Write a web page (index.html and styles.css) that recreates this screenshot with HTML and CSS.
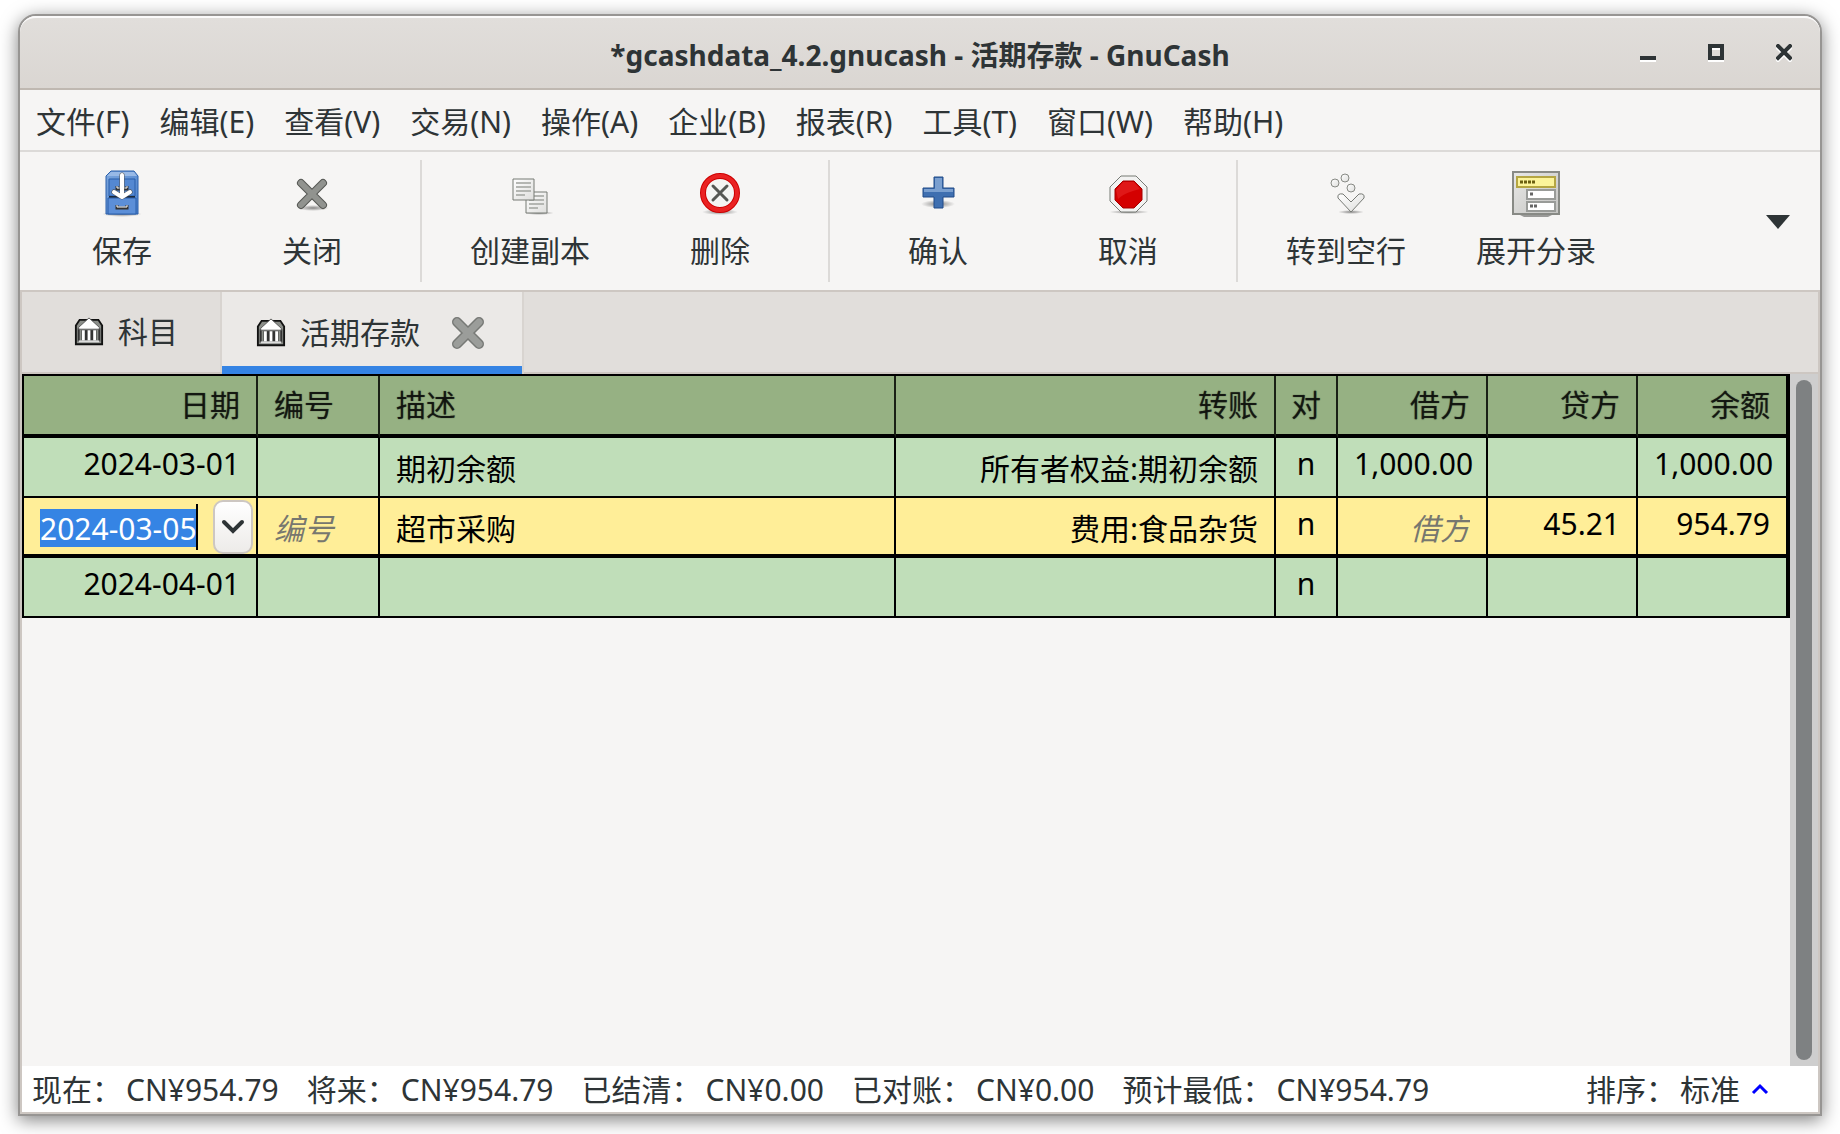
FILE: index.html
```html
<!DOCTYPE html>
<html lang="zh-CN">
<head>
<meta charset="utf-8">
<title>*gcashdata_4.2.gnucash - 活期存款 - GnuCash</title>
<link rel="stylesheet" href="styles.css">
</head>
<body>
<svg class="defs" aria-hidden="true">
  <defs>
    <linearGradient id="gray" x1="0" y1="0" x2="0" y2="1"><stop offset="0" stop-color="#a3a5a2"/><stop offset="1" stop-color="#8b8d8a"/></linearGradient>
    <linearGradient id="blue" x1="0" y1="0" x2="1" y2="1"><stop offset="0" stop-color="#7ba5dc"/><stop offset="1" stop-color="#4a80cc"/></linearGradient>
    <linearGradient id="paper" x1="0" y1="0" x2="1" y2="1"><stop offset="0" stop-color="#ffffff"/><stop offset="1" stop-color="#dededc"/></linearGradient>
    <linearGradient id="metal" x1="0" y1="0" x2="1" y2="1"><stop offset="0" stop-color="#e8e8e6"/><stop offset="1" stop-color="#c4c4c2"/></linearGradient>
    <radialGradient id="soft"><stop offset="0" stop-color="#000" stop-opacity=".45"/><stop offset="1" stop-color="#000" stop-opacity="0"/></radialGradient>
    <symbol id="bank" viewBox="0 0 32 32">
      <path d="M6 3h20l4 6v20H2V9z" fill="#8a8d88" stroke="#111" stroke-width="2"/>
      <path d="M5 12v14M27 12v14" stroke="#333" stroke-width="2"/>
      <path d="M16 1 5 11v2h22v-2z" fill="#fff" stroke="#555" stroke-width="1"/>
      <path d="M8 14h16v11H8z" fill="#333"/>
      <path d="M10 14v11M16 14v11M22 14v11" stroke="#fff" stroke-width="3"/>
      <path d="M5 26h22" stroke="#ddd" stroke-width="2"/>
    </symbol>
  </defs>
</svg>
<main class="window">
  <header class="titlebar">
    <h1>*gcashdata_4.2.gnucash - 活期存款 - GnuCash</h1>
    <div class="controls">
      <button type="button" aria-label="最小化"><svg viewBox="0 0 16 18"><path d="M0 14h16v4H0z" fill="#fff"/><path d="M0 12h16v4H0z"/></svg></button>
      <button type="button" aria-label="最大化"><svg viewBox="0 0 16 18"><path d="M2 4h12v12H2z" fill="none" stroke="#fff" stroke-width="4"/><path d="M2 2h12v12H2z" fill="none" stroke="#2e3436" stroke-width="4"/></svg></button>
      <button type="button" aria-label="关闭窗口"><svg viewBox="0 0 16 18"><path d="M2 4l12 12M14 4L2 16" stroke="#fff" stroke-width="4" stroke-linecap="square"/><path d="M2 2l12 12M14 2L2 14" stroke="#2e3436" stroke-width="4" stroke-linecap="square"/></svg></button>
    </div>
  </header>

  <nav class="menubar">
    <button type="button">文件(F)</button><button type="button">编辑(E)</button><button type="button">查看(V)</button><button type="button">交易(N)</button><button type="button">操作(A)</button><button type="button">企业(B)</button><button type="button">报表(R)</button><button type="button">工具(T)</button><button type="button">窗口(W)</button><button type="button">帮助(H)</button>
  </nav>

  <div class="toolbar">
    <button type="button">
      <svg viewBox="0 0 48 48"><ellipse cx="24" cy="45" rx="20" ry="3" fill="url(#soft)"/><path d="M13 2h23l4 5v38H8V7z" fill="url(#blue)" stroke="#2a5faa"/><path d="M9 7h30l-3-4H13z" fill="#98b9e6"/><path d="M11 10h26v17H11z" fill="#5488d2" stroke="#2a5faa"/><path d="M11 28h26" stroke="#1c2a3c" stroke-width="2"/><path d="M10 29h28v16H10z" fill="#5c8fd8" stroke="#2a5faa"/><path d="M19 17v3h10v-3M19 36v3h10v-3" fill="none" stroke="#333" stroke-width="3"/><path d="M19 17v2h10v-2M19 36v2h10v-2" fill="none" stroke="#fff"/><path d="M24 6v20M16 23l8 5 8-5" fill="none" stroke="#555" stroke-width="5" stroke-linecap="round" stroke-linejoin="round"/><path d="M24 6v20M16 23l8 5 8-5" fill="none" stroke="#fff" stroke-width="4" stroke-linecap="round" stroke-linejoin="round"/></svg>
      <span>保存</span>
    </button>
    <button type="button">
      <svg viewBox="0 0 48 48"><ellipse cx="25" cy="39" rx="16" ry="3" fill="url(#soft)"/><path d="M13 14l22 22M35 14L13 36" stroke="#555753" stroke-width="8" stroke-linecap="round"/><path d="M13 14l22 22M35 14L13 36" stroke="#91938f" stroke-width="6" stroke-linecap="round"/></svg>
      <span>关闭</span>
    </button>
    <hr>
    <button type="button">
      <svg viewBox="0 0 48 48"><ellipse cx="33" cy="44" rx="15" ry="2" fill="url(#soft)"/><path d="M20 23h21v21H20z" fill="url(#paper)" stroke="#777a75"/><path d="M23 27h15M23 31h15M23 35h15M23 39h9" stroke="#b4b6b2" stroke-width="2"/><path d="M7 10h21v21H7z" fill="url(#paper)" stroke="#777a75"/><path d="M10 14h15M10 18h15M10 22h15M10 26h9" stroke="#b4b6b2" stroke-width="2"/></svg>
      <span>创建副本</span>
    </button>
    <button type="button">
      <svg viewBox="0 0 48 48"><ellipse cx="24" cy="43" rx="18" ry="3" fill="url(#soft)"/><circle cx="24" cy="24" r="17" fill="#f4f4f2" stroke="#c00" stroke-width="6"/><circle cx="24" cy="24" r="17" fill="none" stroke="#ea2222" stroke-width="4"/><path d="M17 17l14 14M31 17L17 31" stroke="#555753" stroke-width="3" stroke-linecap="round"/></svg>
      <span>删除</span>
    </button>
    <hr>
    <button type="button">
      <svg viewBox="0 0 48 48"><ellipse cx="24" cy="35" rx="17" ry="4" fill="url(#soft)"/><path d="M20 8h9v11h11v9H29v11h-9V28H9v-9h11z" fill="#3f6fb0" stroke="#204a87"/><path d="M21 9h7v11h11v3H10v-3h11z" fill="#7a9fcf"/></svg>
      <span>确认</span>
    </button>
    <button type="button">
      <svg viewBox="0 0 48 48"><ellipse cx="25" cy="43" rx="20" ry="2" fill="url(#soft)"/><path d="M17 7h15l11 11v14L32 43H17L6 32V18z" fill="#f2f2f1" stroke="#777a75"/><path d="M19 12h11l8 8v11l-8 8H19l-8-8V20z" fill="#d40000" stroke="#a40000"/><path d="M19 13h11l6 7c-7 2-16 4-22 10l-2-9z" fill="#e01818"/></svg>
      <span>取消</span>
    </button>
    <hr>
    <button type="button">
      <svg viewBox="0 0 48 48"><ellipse cx="29" cy="43" rx="13" ry="2" fill="url(#soft)"/><g fill="url(#paper)" stroke="#888a85"><circle cx="13" cy="14" r="4"/><circle cx="23" cy="9" r="4"/><circle cx="29" cy="19" r="4"/><path d="M29 43L16 29q-1-5 5-4l8 8 8-8q6-1 5 4z" stroke="#777a75"/></g></svg>
      <span>转到空行</span>
    </button>
    <button type="button">
      <svg viewBox="0 0 48 48"><path d="M4 44h40l-8 4H12z" fill="#9a9a98"/><path d="M1 3h46v42H1z" fill="url(#metal)" stroke="#888a85" stroke-width="2"/><path d="M5 8h38v10H5z" fill="#fcf49a" stroke="#b5a642" stroke-width="2"/><path d="M8 13h15" stroke="#6b5f10" stroke-width="3" stroke-dasharray="3 1"/><path d="M15 21h28v9H15zM15 33h28v9H15z" fill="#fff" stroke="#999b98" stroke-width="2"/><path d="M18 25h3M18 37h7" stroke="#666" stroke-width="3" stroke-dasharray="3 1"/></svg>
      <span>展开分录</span>
    </button>
    <button type="button" class="overflow" aria-label="更多"><svg viewBox="0 0 24 14"><path d="M0 0h24L12 14z"/></svg></button>
  </div>

  <section class="notebook">
    <div class="tabs" role="tablist">
      <button type="button" role="tab" class="tab"><svg class="tabicon"><use href="#bank"/></svg>科目</button>
      <div class="tab active" role="tab" aria-selected="true"><svg class="tabicon"><use href="#bank"/></svg>活期存款
        <button type="button" class="tabclose" aria-label="关闭标签页"><svg viewBox="0 0 36 36"><path d="M7 7l22 22M29 7L7 29" stroke="#777976" stroke-width="10" stroke-linecap="round"/><path d="M7 7l22 22M29 7L7 29" stroke="#9b9d9a" stroke-width="7" stroke-linecap="round"/></svg></button>
      </div>
    </div>
    <div class="page">
      <div class="sheet">
        <table class="register">
          <colgroup><col class="c-date"><col class="c-num"><col><col class="c-transfer"><col class="c-flag"><col class="c-money"><col class="c-money"><col class="c-balance"></colgroup>
          <thead>
            <tr><th class="r">日期</th><th>编号</th><th>描述</th><th class="r">转账</th><th class="m">对</th><th class="r">借方</th><th class="r">贷方</th><th class="r">余额</th></tr>
          </thead>
          <tbody>
            <tr><td class="r">2024-03-01</td><td></td><td class="han">期初余额</td><td class="r han">所有者权益:期初余额</td><td class="m">n</td><td class="r">1,000.00</td><td></td><td class="r">1,000.00</td></tr>
            <tr class="current"><td class="edit"><div class="editor"><span class="caret"><input type="text" value="2024-03-05" aria-label="日期"></span><button type="button" class="drop" aria-label="选择日期"><svg viewBox="0 0 24 18"><path d="M3 4l9 9 9-9" fill="none" stroke="#2e3436" stroke-width="4" stroke-linecap="round"/></svg></button></div></td><td class="han"><input type="text" class="blank" placeholder="编号" aria-label="编号"></td><td class="han">超市采购</td><td class="r han">费用:食品杂货</td><td class="m">n</td><td class="han"><input type="text" class="blank r" placeholder="借方" aria-label="借方"></td><td class="r">45.21</td><td class="r">954.79</td></tr>
            <tr><td class="r">2024-04-01</td><td></td><td></td><td></td><td class="m">n</td><td></td><td></td><td></td></tr>
          </tbody>
        </table>
      </div>
      <div class="scrollbar"><div class="thumb"></div></div>
    </div>
    <footer class="status">
      <span>现在：<b>CN¥954.79</b></span><span>将来：<b>CN¥954.79</b></span><span>已结清：<b>CN¥0.00</b></span><span>已对账：<b>CN¥0.00</b></span><span>预计最低：<b>CN¥954.79</b></span>
      <span class="sort">排序：<b>标准</b><svg viewBox="0 0 20 18"><path d="M3 12l7-7 7 7" fill="none" stroke="#00f" stroke-width="3"/></svg></span>
    </footer>
  </section>
</main>
</body>
</html>
```
FILE: styles.css
```css
* { box-sizing: border-box; }

body {
  margin: 0;
  min-height: 100vh;
  padding: 14px 18px 18px;
  display: flex;
  background: #fff;
  color: #2e3436;
  font: 30px/40px "Noto Sans", "Noto Sans CJK SC", sans-serif;
}

button, input {
  margin: 0;
  padding: 0;
  border: 0;
  background: none;
  color: inherit;
  font: inherit;
}

svg { display: block; fill: #2e3436; }
.defs { position: absolute; width: 0; height: 0; }

.window {
  flex: 1;
  min-width: 0;
  display: flex;
  flex-direction: column;
  border: 2px solid #979593;
  border-radius: 18px 18px 0 0;
  background: #f6f5f4;
  box-shadow: 0 4px 18px rgba(0, 0, 0, .5);
}

/* Title bar */
.titlebar {
  height: 74px;
  display: grid;
  grid-template-columns: 1fr auto 1fr;
  align-items: center;
  padding-top: 4px;
  border-top: 2px solid #fbfafa;
  border-bottom: 2px solid #bfb8b1;
  border-radius: 16px 16px 0 0;
  background: linear-gradient(#e1dedb, #dad6d2);
}
.titlebar h1 {
  grid-column: 2;
  margin: 0;
  font-size: 28px;
  font-weight: 700;
}
.controls {
  display: flex;
  justify-content: flex-end;
  gap: 52px;
  padding: 0 28px 4px 0;
}
.controls svg { width: 16px; height: 18px; }

/* Menu bar */
.menubar {
  height: 62px;
  display: flex;
  align-items: center;
  padding: 4px 1px 0;
  border-bottom: 2px solid #dcdad8;
}
.menubar button { padding: 0 15px; white-space: nowrap; }

/* Toolbar */
.toolbar {
  height: 140px;
  display: flex;
  align-items: center;
  padding: 0 30px 0 7px;
  border-bottom: 2px solid #cdc7c2;
}
.toolbar button {
  width: 190px;
  display: flex;
  flex-direction: column;
  align-items: center;
  gap: 14px;
  padding-bottom: 2px;
}
.toolbar button svg { width: 48px; height: 48px; }
.toolbar hr {
  width: 2px;
  height: 122px;
  margin: 0 13px;
  border: 0;
  background: #dcdad8;
}
.toolbar .overflow { width: 24px; margin-left: auto; padding: 2px 0 0; }
.toolbar .overflow svg { width: 24px; height: 14px; }

/* Tabs */
.notebook {
  flex: 1;
  display: flex;
  flex-direction: column;
  border: 2px solid #cdc7c2;
  border-top: 0;
}
.tabs {
  height: 82px;
  display: flex;
  background: #e1dedb;
  border-bottom: 2px solid #cdc7c2;
}
.tab {
  display: flex;
  align-items: center;
  height: 80px;
  padding: 0 42px 0 52px;
  border-right: 2px solid #d8d4d0;
}
.tab.active {
  height: 82px;
  padding: 0 36px 0 34px;
  background: #ebe9e7;
  box-shadow: inset 0 -8px #3584e4;
}
.tabicon { width: 30px; height: 30px; margin-right: 14px; }
.tabclose { margin-left: 30px; }
.tabclose svg { width: 36px; height: 36px; }

/* Register */
.page { flex: 1; display: flex; }
.sheet { flex: 1; min-width: 0; }
.register {
  width: 100%;
  table-layout: fixed;
  border-collapse: separate;
  border-spacing: 0;
  border: solid #000;
  border-width: 2px 0 0 2px;
  color: #000;
}
.c-date { width: 234px; }
.c-num { width: 122px; }
.c-transfer { width: 380px; }
.c-flag { width: 62px; }
.c-money { width: 150px; }
.c-balance { width: 152px; }
.register th, .register td {
  height: 60px;
  padding: 6px 16px 0;
  border: solid #000;
  border-width: 0 2px 2px 0;
  background: #c0deb9;
  text-align: left;
  vertical-align: top;
  font-weight: 400;
  white-space: nowrap;
}
.register th {
  height: 62px;
  padding-top: 9px;
  border-right-color: #1a2016;
  border-bottom-width: 4px;
  background: #96b183;
  color: rgba(0, 0, 0, .65);
  text-shadow: 0 0 1px rgba(0, 0, 0, .7);
}
.register th:last-child, .register td:last-child { border-right: 4px solid #000; }
.register .han { padding-top: 11px; }
.register .r { text-align: right; }
.register .m { padding-left: 0; padding-right: 0; text-align: center; }
.register .current td { background: #ffee98; border-bottom-width: 4px; }
.register .edit { padding: 2px 3px 0 16px; }
.editor {
  display: flex;
  align-items: center;
  justify-content: space-between;
}
.caret { display: flex; padding: 5px 0 3px; border-right: 2px solid #000; }
.caret input {
  width: 156px;
  height: 38px;
  padding-top: 2px;
  background: #3584e4;
  color: #fff;
  text-align: right;
}
.drop {
  width: 40px;
  height: 54px;
  display: grid;
  place-items: center;
  border: 2px solid #cdc7c2;
  border-radius: 10px;
  background: linear-gradient(#fff, #edebe9);
}
.drop svg { width: 24px; height: 18px; }
.blank { display: block; width: 100%; height: 40px; }
.blank::placeholder { color: #77776f; font-style: italic; opacity: 1; }

.scrollbar { width: 28px; padding: 6px; display: flex; background: #cecece; }
.thumb { flex: 1; border-radius: 8px; background: #7e8182; }

/* Summary bar */
.status {
  height: 46px;
  display: flex;
  align-items: center;
  gap: 28px;
  padding: 2px 48px 0 10px;
  background: #fff;
  white-space: nowrap;
}
.status b { margin-left: 4px; font-weight: 400; }
.sort { margin-left: auto; display: flex; align-items: center; }
.sort svg { width: 20px; height: 18px; margin-left: 10px; }
```
